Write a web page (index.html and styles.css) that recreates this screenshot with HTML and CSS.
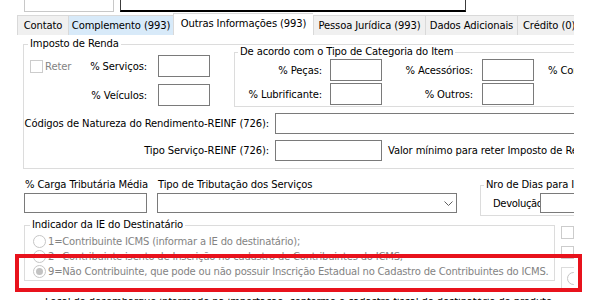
FILE: index.html
```html
<!DOCTYPE html>
<html lang="pt-BR">
<head>
    <meta charset="UTF-8">
    <title>Outras Informações</title>
    <link rel="stylesheet" href="styles.css">
</head>
<body>
    <div class="window">
        <div class="strip">
            <div class="edit-a"></div>
            <div class="edit-b"></div>
        </div>

        <div class="tabs">
            <div class="tab t1">Contato</div>
            <div class="tab t2 hot">Complemento (993)</div>
            <div class="tab t3 active">Outras Informações (993)</div>
            <div class="tab t4">Pessoa Jurídica (993)</div>
            <div class="tab t5">Dados Adicionais</div>
            <div class="tab t6">Crédito (0)</div>
        </div>

        <div class="page">
            <div class="group renda">
                <div class="caption">Imposto de Renda</div>
                <div class="renda-top">
                    <div class="renda-left">
                        <div class="cell split">
                            <span class="check-wrap"><span class="check"></span><span class="muted">Reter</span></span>
                            <span>% Serviços:</span>
                        </div>
                        <div class="edit"></div>
                        <div class="cell right">% Veículos:</div>
                        <div class="edit"></div>
                    </div>
                    <div class="group cat">
                        <div class="caption">De acordo com o Tipo de Categoria do Item</div>
                        <div class="cat-grid">
                            <div class="lbl l1">% Peças:</div>
                            <div class="edit"></div>
                            <div class="lbl l2">% Acessórios:</div>
                            <div class="edit"></div>
                            <div class="lbl l3">% Combustível:</div>
                            <div class="lbl l1">% Lubrificante:</div>
                            <div class="edit"></div>
                            <div class="lbl l2">% Outros:</div>
                            <div class="edit"></div>
                            <div></div>
                        </div>
                    </div>
                </div>
                <div class="line first">
                    <div class="line-label">Códigos de Natureza do Rendimento-REINF (726):</div>
                    <div class="edit wide"></div>
                </div>
                <div class="line">
                    <div class="line-label">Tipo Serviço-REINF (726):</div>
                    <div class="edit short"></div>
                    <div class="after">Valor mínimo para reter Imposto de Renda:</div>
                </div>
            </div>

            <div class="fields">
                <div class="col carga">
                    <div class="field-label">% Carga Tributária Média</div>
                    <div class="edit tall"></div>
                </div>
                <div class="col trib">
                    <div class="field-label">Tipo de Tributação dos Serviços</div>
                    <div class="edit tall combo">
                        <svg width="9" height="5" viewBox="0 0 9 5"><polyline points="0.5,0.5 4.5,4.5 8.5,0.5" fill="none" stroke="#606060" stroke-width="1"/></svg>
                    </div>
                </div>
                <div class="group dias">
                    <div class="caption">Nro de Dias para Inativação</div>
                    <div class="dias-row">
                        <span class="dias-label">Devolução</span>
                        <div class="edit tall grow"></div>
                    </div>
                </div>
            </div>

            <div class="ie-row">
                <div class="group ie">
                    <div class="caption">Indicador da IE do Destinatário</div>
                    <div class="radios">
                        <div class="radio"><span class="dot"></span>1=Contribuinte ICMS (informar a IE do destinatário);</div>
                        <div class="radio"><span class="dot"></span>2=Contribuinte isento de Inscrição no cadastro de Contribuintes do ICMS,</div>
                        <div class="radio"><span class="dot on"></span>9=Não Contribuinte, que pode ou não possuir Inscrição Estadual no Cadastro de Contribuintes do ICMS.</div>
                    </div>
                </div>
                <div class="side">
                    <span class="check side-check"></span>
                    <span class="check side-check second"></span>
                    <div class="side-box"><span class="dot"></span></div>
                </div>
            </div>

            <div class="tail">Local de desembarque informado na importação, conforme o cadastro fiscal do destinatário do produto</div>
        </div>
    </div>

    <div class="mark"></div>
</body>
</html>
```

FILE: styles.css
```css
* {
    box-sizing: border-box;
}
body {
    margin: 0;
    background: #fff;
    font-family: "DejaVu Sans", sans-serif;
    font-size: 10px;
    letter-spacing: -0.12px;
    color: #000;
    position: relative;
    height: 307px;
    overflow: hidden;
}
.window {
    width: 574px;
    overflow: hidden;
}

/* edits cut off above the tabs */
.strip {
    height: 15px;
    display: flex;
    align-items: flex-start;
}
.edit-a {
    margin-left: 24px;
    width: 90px;
    height: 12px;
    border: 1px solid #c8c8c8;
    border-top: none;
}
.edit-b {
    margin-left: 6px;
    width: 346px;
    height: 12px;
    border-left: 1px solid #3c3c3c;
    border-right: 1px solid #3c3c3c;
    border-bottom: 2px solid #000;
}

/* tabs */
.tabs {
    display: flex;
    align-items: flex-start;
    height: 20px;
    padding-left: 17px;
}
.tab {
    flex: none;
    height: 20px;
    line-height: 19px;
    border-top: 1px solid #d9d9d9;
    border-left: 1px solid #d9d9d9;
    background: #f0f0f0;
    text-align: center;
    white-space: nowrap;
    overflow: hidden;
}
.tab.hot {
    background: #d8eaf9;
}
.tab.active {
    background: #fff;
    height: 22px;
    margin-top: -2px;
    line-height: 20px;
}
.t1 { width: 51px; }
.t2 { width: 105px; }
.t3 { width: 140px; }
.t4 { width: 112px; }
.t5 { width: 92px; }
.t6 { width: 80px; text-align: left; padding-left: 5px; }

/* group boxes */
.group {
    border: 1px solid #dcdcdc;
}
.caption {
    width: fit-content;
    height: 14px;
    line-height: 14px;
    margin-top: -8px;
    padding: 0 2px;
    background: #fff;
    white-space: nowrap;
}
.edit {
    border: 1px solid #7a7a7a;
    background: #fff;
}
.muted {
    color: #838383;
}
.check {
    display: inline-block;
    width: 13px;
    height: 13px;
    border: 1px solid #cccccc;
    background: #fff;
    flex: none;
}

/* imposto de renda */
.renda {
    margin: 9px 0 0 23px;
    width: 600px;
    padding-bottom: 7px;
}
.renda > .caption {
    margin-left: 4px;
}
.renda-top {
    display: flex;
    align-items: flex-start;
    margin-top: 1px;
}
.renda-left {
    flex: none;
    margin-top: 3px;
    display: grid;
    grid-template-columns: 134px 52px;
    grid-auto-rows: 22px;
    row-gap: 7px;
}
.cell {
    display: flex;
    align-items: center;
    padding: 0 11px 0 6px;
    white-space: nowrap;
}
.cell.split {
    justify-content: space-between;
}
.cell.right {
    justify-content: flex-end;
}
.check-wrap {
    display: flex;
    align-items: center;
    gap: 2px;
}
.cat {
    margin-left: 24px;
    flex: 1;
    padding-bottom: 1px;
}
.cat > .caption {
    margin-left: 3px;
}
.cat-grid {
    display: grid;
    grid-template-columns: 95px 52px 100px 52px auto;
    grid-auto-rows: 22px;
    row-gap: 2px;
}
.lbl {
    display: flex;
    align-items: center;
    white-space: nowrap;
}
.l1 { justify-content: flex-end; padding-right: 8px; }
.l2 { justify-content: flex-end; padding-right: 9px; }
.l3 { padding-left: 14px; }

.line {
    display: flex;
    align-items: center;
    height: 21px;
    margin-top: 6px;
}
.line > * {
    flex: none;
}
.line-label {
    width: 251px;
    text-align: right;
    padding-right: 6px;
    white-space: nowrap;
}
.line .edit {
    height: 21px;
}
.edit.wide {
    width: 320px;
}
.edit.short {
    width: 107px;
}
.after {
    margin-left: 6px;
    white-space: nowrap;
}

/* carga / tributacao / dias */
.fields {
    display: flex;
    align-items: flex-start;
    margin-top: 9px;
}
.col {
    flex: none;
}
.field-label {
    height: 14px;
    line-height: 14px;
    margin-bottom: 1px;
    padding-left: 1px;
    white-space: nowrap;
}
.edit.tall {
    height: 20px;
}
.carga {
    margin-left: 24px;
    width: 123px;
}
.trib {
    margin-left: 10px;
    width: 300px;
}
.combo {
    display: flex;
    align-items: center;
    justify-content: flex-end;
    padding-right: 3px;
}
.dias {
    margin: 7px 0 0 23px;
    width: 200px;
    flex: none;
    padding-bottom: 2px;
}
.dias > .caption {
    margin-left: 3px;
}
.dias-row {
    display: flex;
    align-items: center;
    margin-top: 1px;
    padding-left: 12px;
}
.dias-label {
    width: 47px;
    flex: none;
    letter-spacing: -0.35px;
    white-space: nowrap;
}
.grow {
    flex: 1;
}

/* indicador da IE */
.ie-row {
    display: flex;
    align-items: flex-start;
    margin-top: 9px;
}
.ie {
    margin-left: 24px;
    width: 531px;
    flex: none;
    padding-bottom: 1px;
}
.ie > .caption {
    margin-left: 5px;
}
.radios {
    margin-top: 2px;
    padding-left: 8px;
}
.radio {
    display: flex;
    align-items: center;
    height: 15px;
    color: #838383;
    letter-spacing: -0.2px;
    white-space: nowrap;
}
.dot {
    width: 13px;
    height: 13px;
    border: 1px solid #c6c6c6;
    border-radius: 50%;
    margin-right: 2px;
    flex: none;
    display: flex;
    align-items: center;
    justify-content: center;
    background: #fff;
}
.dot.on::after {
    content: "";
    width: 7px;
    height: 7px;
    border-radius: 50%;
    background: #c2c2c2;
}
.side {
    margin-left: 6px;
    display: flex;
    flex-direction: column;
    flex: none;
    width: 40px;
}
.side-check {
    margin-top: 1px;
}
.side-check.second {
    margin-top: 7px;
}
.side-box {
    margin-top: 8px;
    height: 22px;
    border: 1px solid #dcdcdc;
    padding: 4px 0 0 5px;
}

/* text cut by the scroll area: only the tops of the letters show */
.tail {
    margin: 9px 0 0 45px;
    height: 2px;
    line-height: 8px;
    overflow: hidden;
    white-space: nowrap;
}

/* highlight drawn over the screenshot */
.mark {
    position: absolute;
    left: 15px;
    top: 254px;
    width: 567px;
    height: 38px;
    border: 4px solid #e8121c;
}
```
